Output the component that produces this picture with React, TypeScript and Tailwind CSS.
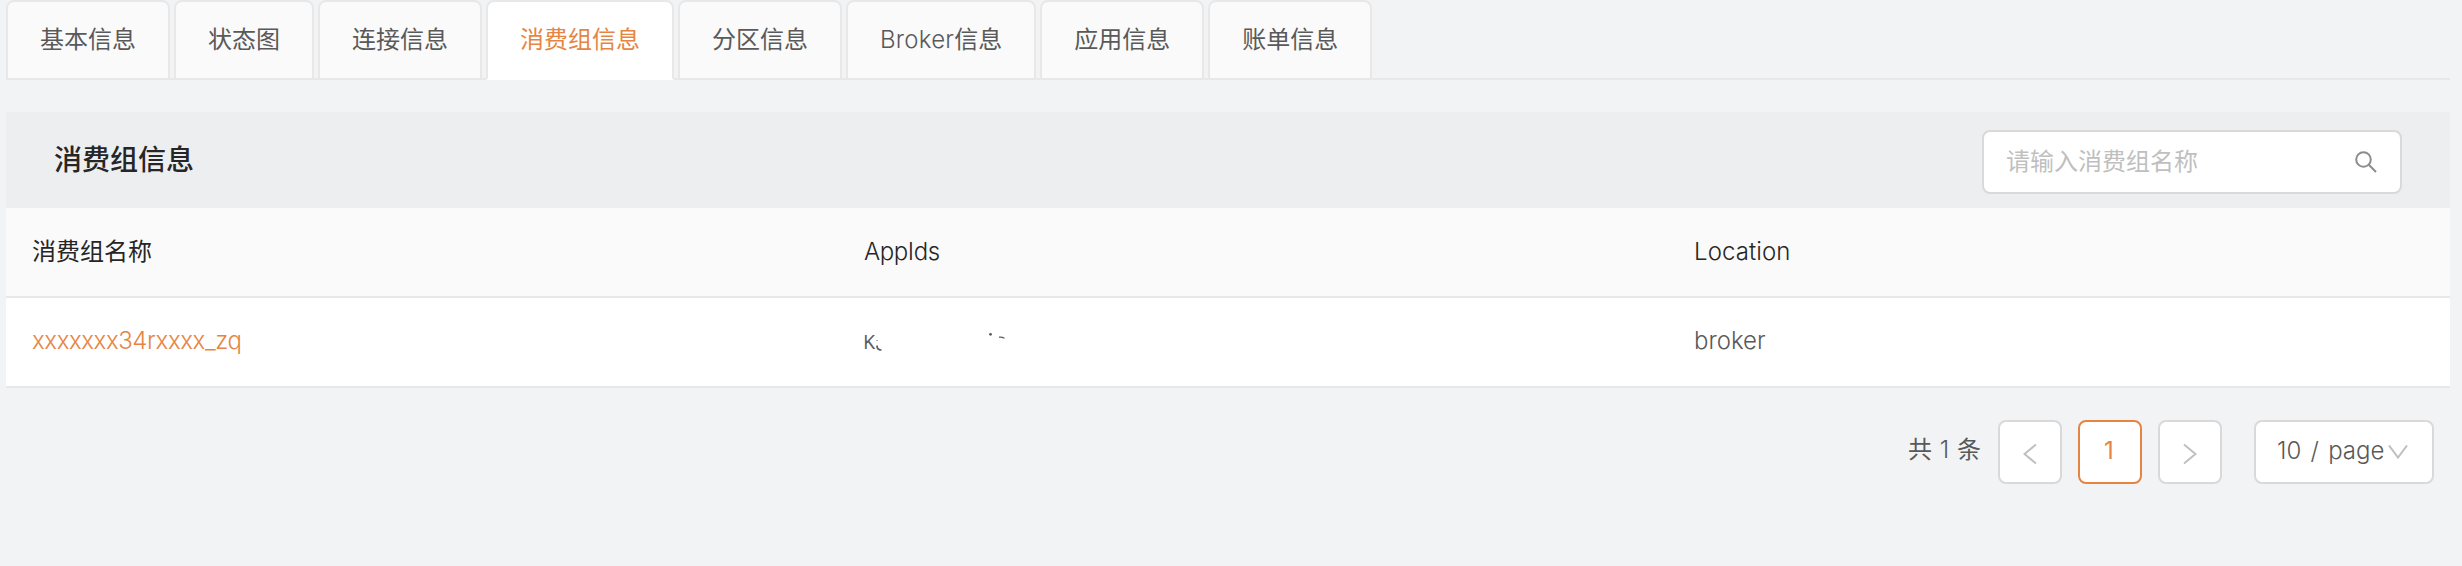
import React from "react";

const TABS = [
  { label: "基本信息" },
  { label: "状态图" },
  { label: "连接信息" },
  { label: "消费组信息", active: true },
  { label: "分区信息" },
  { label: "Broker信息" },
  { label: "应用信息" },
  { label: "账单信息" },
];

function Tab({ label, active }: { label: string; active?: boolean }) {
  return (
    <div
      className={
        "flex h-20 items-center justify-center whitespace-nowrap rounded-t-lg border-2 px-8 pb-px " +
        (active
          ? "border-[#e8e8e8] border-b-white bg-white text-[#e68543]"
          : "border-[#e8e8e8] bg-[#fafafa]")
      }
    >
      {label === "Broker信息" ? (
        <span>
          <span className="font-light tracking-[0.25px]">Broker</span>信息
        </span>
      ) : (
        label
      )}
    </div>
  );
}

function PageButton({ children, active }: { children: React.ReactNode; active?: boolean }) {
  return (
    <div
      className={
        "flex size-16 items-center justify-center rounded-lg border-2 bg-white " +
        (active ? "border-[#e68543] text-[#e68543]" : "border-[#d9d9d9] text-[#bfbfbf]")
      }
    >
      {children}
    </div>
  );
}

export default function App() {
  return (
    <div className="h-[566px] w-[2462px] overflow-hidden bg-[#f2f3f5] pl-[6px] pr-3 font-['Inter','Noto_Sans_CJK_SC',sans-serif] text-2xl text-[#595959]">
      <div className="flex h-20 gap-1 bg-[linear-gradient(#e8e8e8,#e8e8e8)] bg-[length:100%_2px] bg-bottom bg-no-repeat">
        {TABS.map((t) => (
          <Tab key={t.label} {...t} />
        ))}
      </div>

      <div className="mt-8 flex h-24 items-center justify-between bg-[#edeef0] pl-12 pr-12">
        <h2 className="text-[28px] font-medium leading-none text-[#262626]">消费组信息</h2>
        <div className="mt-1 flex h-16 w-[420px] items-center justify-between rounded-lg border-2 border-[#d9d9d9] bg-white pl-[22px] pr-[22px]">
          <span className="text-[#bfbfbf]">请输入消费组名称</span>
          <svg width="24" height="24" viewBox="0 0 24 24" fill="none" stroke="#8c8c8c" strokeWidth="2">
            <circle cx="9.5" cy="9.5" r="7.3" />
            <path d="M14.8 14.8 22 22" />
          </svg>
        </div>
      </div>

      <div className="grid h-[90px] grid-cols-[831px_831px_1fr] items-center border-b-2 border-[#e8e8e8] bg-[#fafafa] text-[#262626]">
        <div className="pl-[26px]">消费组名称</div>
        <div className="pl-[27px] font-light tracking-[-0.4px]">AppIds</div>
        <div className="pl-[26px] font-light tracking-[0.1px]">Location</div>
      </div>
      <div className="grid h-[90px] grid-cols-[831px_831px_1fr] items-center border-b-2 border-[#e8e8e8] bg-white pb-0.5 font-light">
        <div className="pl-[26px] tracking-[-0.42px] text-[#e68543]">xxxxxxx34rxxxx_zq</div>
        <div className="flex items-center pl-[26px]">
          <span className="[clip-path:inset(10px_0_0_0)]">k</span>
          <svg width="150" height="32" viewBox="0 0 150 32" fill="none" stroke="#595959">
            <path d="M1 20.5c0 3 1.2 4.6 4.5 4.5" strokeWidth="1.7" />
            <path d="M1 15v1" strokeWidth="1" />
            <circle cx="114.5" cy="9.3" r="1.4" fill="#595959" stroke="none" />
            <path d="M123 12.2q3-.3 5.5 1" strokeWidth="1.2" />
          </svg>
        </div>
        <div className="pl-[26px]">broker</div>
      </div>

      <div className="mt-8 flex items-center justify-end pr-4">
        <span className="mr-[17px] whitespace-nowrap pb-1 [word-spacing:1px]">
          共 <span className="font-light">1</span> 条
        </span>
        <div className="flex gap-4">
          <PageButton>
            <svg className="mt-1" width="14" height="22" viewBox="0 0 14 22" fill="none" stroke="currentColor" strokeWidth="2">
              <path d="M13 1.5 1.5 11 13 20.5" />
            </svg>
          </PageButton>
          <PageButton active>
            <span className="pb-0.5 pr-0.5">1</span>
          </PageButton>
          <PageButton>
            <svg className="mt-1" width="14" height="22" viewBox="0 0 14 22" fill="none" stroke="currentColor" strokeWidth="2">
              <path d="M1 1.5 12.5 11 1 20.5" />
            </svg>
          </PageButton>
        </div>
        <div className="ml-8 flex h-16 w-[180px] items-center justify-between rounded-lg border-2 border-[#d9d9d9] bg-white pl-[21px] pr-6">
          <span className="whitespace-pre pb-0.5 font-light [word-spacing:2.5px]">10 / page</span>
          <svg className="shrink-0" width="20" height="14" viewBox="0 0 20 14" fill="none" stroke="#bfbfbf" strokeWidth="2">
            <path d="M1 .5 10 12.5 19 .5" />
          </svg>
        </div>
      </div>
    </div>
  );
}
